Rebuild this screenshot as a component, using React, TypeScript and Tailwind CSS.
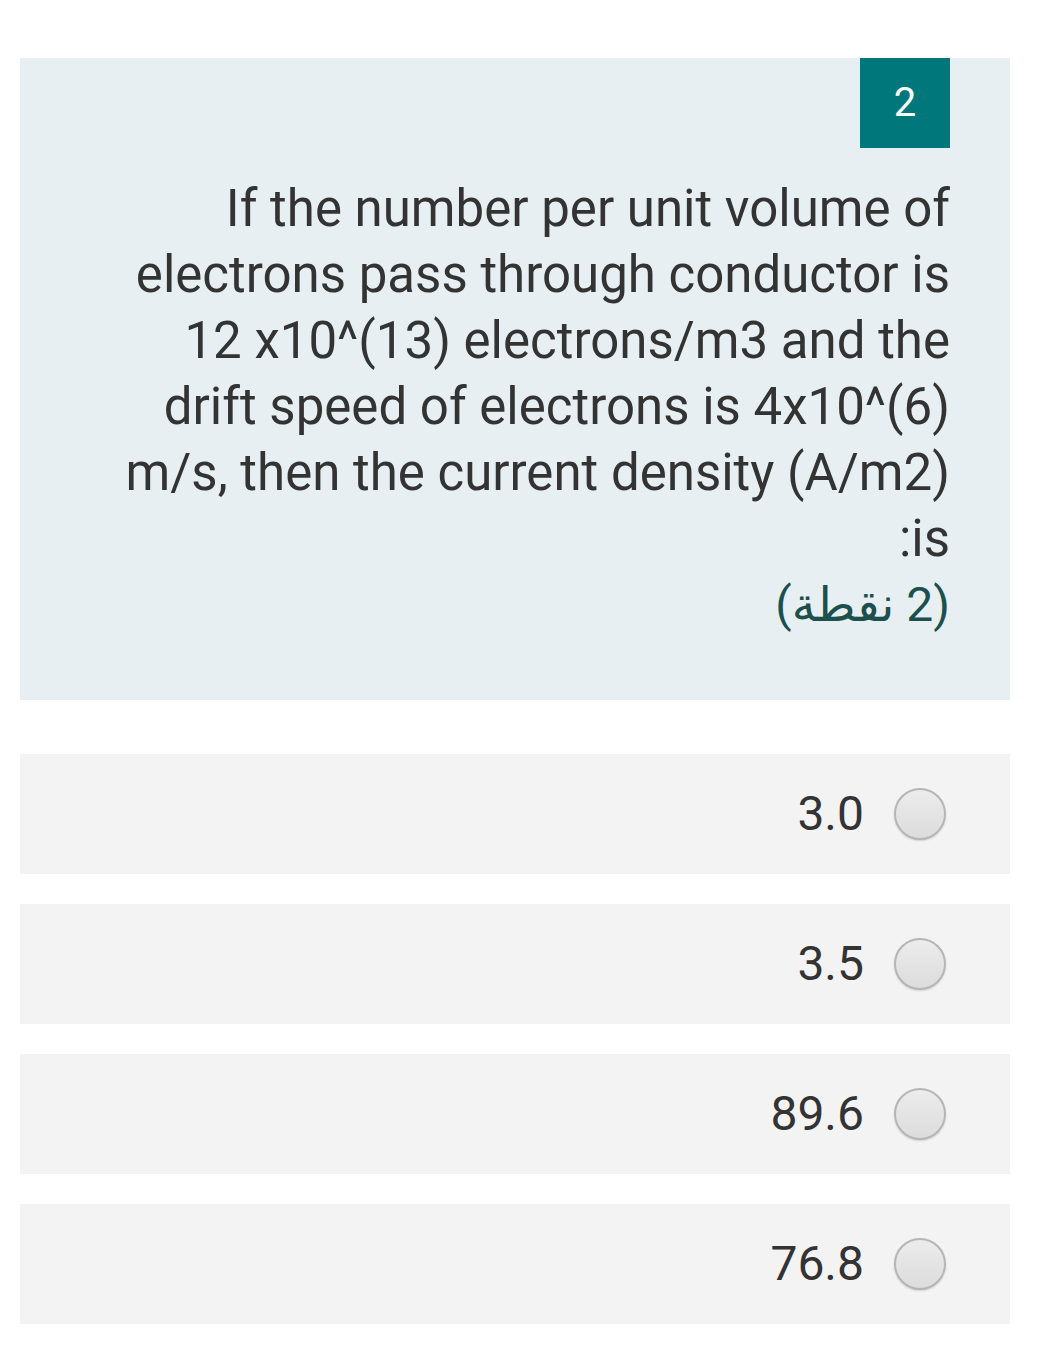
const options = ["3.0", "3.5", "89.6", "76.8"];

function Radio() {
  return (
    <span className="block h-[52px] w-[52px] shrink-0 rounded-full border-2 border-[#b5b5b5] bg-gradient-to-b from-[#ececec] to-[#dcdcdc] shadow-[0_1px_2px_rgba(0,0,0,0.15)]" />
  );
}

export default function App() {
  return (
    <div
      dir="rtl"
      className="min-h-[1358px] bg-white pr-[45px] pl-[20px] pt-[58px] pb-[34px] text-[#333333]"
      style={{ fontFamily: "Roboto, 'DejaVu Sans', sans-serif" }}
    >
      <section className="bg-[#e7eff2] pr-[60px] pl-[90px] pb-[62px]">
        <div className="flex">
          <div className="flex h-[90px] w-[90px] items-center justify-center bg-[#00777a] text-[40px] text-white">
            2
          </div>
        </div>
        <p className="mt-[28px] text-[51px] leading-[66px]">
          If the number per unit volume of electrons pass through conductor is
          12 x10^(13) electrons/m3 and the drift speed of electrons is
          4x10^(6) m/s, then the current density (A/m2) is:
        </p>
        <p className="text-[48px] leading-[66px] text-[#1d4f4d]">(2 نقطة)</p>
      </section>

      <div className="mt-[54px] flex flex-col gap-[30px]">
        {options.map((o) => (
          <label
            key={o}
            className="flex h-[120px] items-center gap-[30px] bg-[#f3f3f3] pr-[64px]"
          >
            <Radio />
            <span className="text-[48px] leading-none">{o}</span>
          </label>
        ))}
      </div>
    </div>
  );
}
